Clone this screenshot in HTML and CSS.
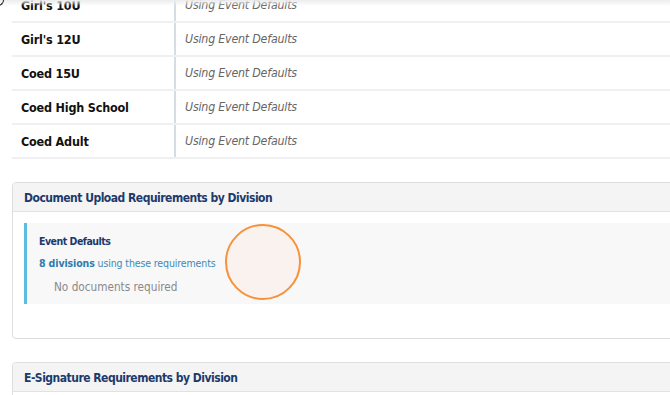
FILE: index.html
```html
<!DOCTYPE html>
<html>
<head>
<meta charset="utf-8">
<link rel="stylesheet" href="styles.css">
</head>
<body>
<div class="page">
  <div class="divtable">
    <div class="row"><div class="name">Girl's 10U</div><div class="val">Using Event Defaults</div></div>
    <div class="row"><div class="name">Girl's 12U</div><div class="val">Using Event Defaults</div></div>
    <div class="row"><div class="name">Coed 15U</div><div class="val">Using Event Defaults</div></div>
    <div class="row"><div class="name">Coed High School</div><div class="val">Using Event Defaults</div></div>
    <div class="row"><div class="name">Coed Adult</div><div class="val">Using Event Defaults</div></div>
  </div>

  <section class="panel">
    <header class="panel-head">Document Upload Requirements by Division</header>
    <div class="panel-body">
      <div class="req">
        <div class="req-title">Event Defaults</div>
        <div class="req-count"><b>8 divisions</b> using these requirements</div>
        <div class="req-none">No documents required</div>
      </div>
    </div>
  </section>

  <section class="panel">
    <header class="panel-head">E-Signature Requirements by Division</header>
    <div class="panel-body"></div>
  </section>
</div>
<div class="topshade"></div>
<div class="corner"></div>
<div class="click"></div>
</body>
</html>
```
FILE: styles.css
```css
html, body {
  margin: 0;
  padding: 0;
  background: #fff;
  overflow: hidden;
}
body {
  font-family: "DejaVu Sans Condensed", "DejaVu Sans", sans-serif;
  position: relative;
  height: 395px;
}
.page {
  width: 720px;
  padding-left: 12px;
  margin-top: -11px;
}
.divtable {
  display: flex;
  flex-direction: column;
}
.row {
  display: flex;
  height: 32px;
  border-bottom: 2px solid #f0f0f2;
}
.name {
  width: 153px;
  padding-left: 9px;
  border-right: 2px solid #d6dce4;
  font-weight: bold;
  font-size: 12.5px;
  letter-spacing: -0.2px;
  color: #111;
  display: flex;
  align-items: center;
}
.val {
  padding-left: 9px;
  font-style: italic;
  font-size: 12.3px;
  letter-spacing: -0.2px;
  color: #666;
  display: flex;
  align-items: center;
}
.panel {
  margin-top: 23px;
  border: 1px solid #dedede;
  border-radius: 4px;
  background: #fff;
}
.panel-head {
  height: 27px;
  background: #f4f4f4;
  border-bottom: 1px solid #e2e2e2;
  border-radius: 4px 4px 0 0;
  padding-left: 11px;
  padding-top: 1px;
  display: flex;
  align-items: center;
  font-weight: bold;
  font-size: 12px;
  letter-spacing: -0.5px;
  color: #1c3a6b;
}
.panel-body {
  padding: 11px 0 34px 11px;
}
.req {
  background: #f8f8f8;
  border-left: 3px solid #5bbde0;
  height: 81px;
  padding-left: 12px;
  box-sizing: border-box;
  padding-top: 11px;
}
.req-title {
  font-size: 10.5px;
  letter-spacing: -0.5px;
  font-weight: bold;
  color: #1c3a6b;
  line-height: 14px;
}
.req-count {
  margin-top: 8px;
  font-size: 10.5px;
  letter-spacing: -0.12px;
  color: #3f88b6;
  line-height: 14px;
}
.req-count b {
  color: #2f7bb0;
}
.req-none {
  margin-top: 10px;
  padding-left: 15px;
  font-size: 11.7px;
  color: #8a8a8a;
  line-height: 14px;
}
.topshade {
  position: absolute;
  left: 0;
  top: 0;
  width: 100%;
  height: 6px;
  background: linear-gradient(#ececec, rgba(255,255,255,0));
}
.corner {
  position: absolute;
  left: -6px;
  top: -6px;
  width: 9px;
  height: 11px;
  border-radius: 0 0 6px 0;
  border-right: 1px solid #222;
  border-bottom: 1px solid #222;
}
.click {
  position: absolute;
  left: 225px;
  top: 224px;
  width: 72px;
  height: 72px;
  border: 2px solid #f7913a;
  border-radius: 50%;
  background: rgba(250, 236, 232, 0.55);
}
```
